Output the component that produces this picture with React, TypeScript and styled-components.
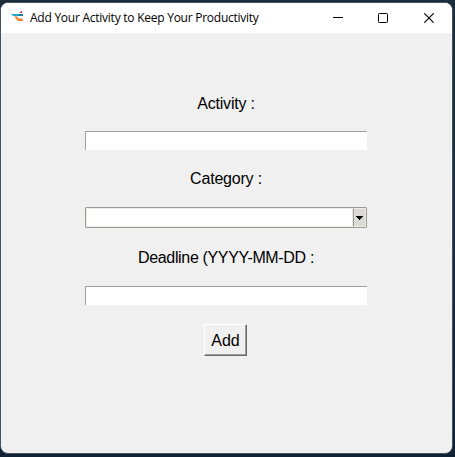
import React from "react";
import styled, { createGlobalStyle } from "styled-components";

const GlobalStyle = createGlobalStyle`
  * { box-sizing: border-box; }
  body { margin: 0; background: #1b2b3a; overflow: hidden; }
`;

const Desktop = styled.div`
  width: 455px;
  height: 457px;
  padding: 2px 2px 3px 0;
  background: linear-gradient(#1c2c3b, #1c2f40 50%, #0f2132);
`;

const Window = styled.main`
  display: flex;
  flex-direction: column;
  width: 453px;
  height: 452px;
  border: 1px solid #46535e;
  border-radius: 8px;
  overflow: hidden;
  background: #f0f0f0;
  color: #000;
`;

const TitleBar = styled.header`
  display: flex;
  align-items: center;
  flex: none;
  height: 30px;
  padding-left: 10px;
  background: #fff;
`;

const AppIcon = styled.svg`
  flex: none;
  width: 14px;
  height: 14px;
  margin-right: 5px;
`;

const Title = styled.h1`
  flex: 1;
  margin: 0;
  font: 400 12px/30px "Open Sans", "Noto Sans", sans-serif;
  letter-spacing: -0.25px;
  white-space: nowrap;
`;

const Controls = styled.div`
  display: flex;
  height: 100%;
`;

const ControlButton = styled.button<{ $width: number }>`
  display: flex;
  align-items: center;
  justify-content: center;
  width: ${(p) => p.$width}px;
  height: 29px;
  padding: 0;
  border: 0;
  background: transparent;
`;

const Form = styled.form`
  display: flex;
  flex-direction: column;
  align-items: center;
  width: 282px;
  margin: 59px 0 0 84px;
  font: 16px/24px "Liberation Sans", Arial, sans-serif;
`;

const Label = styled.label<{ $tracking: number }>`
  height: 24px;
  letter-spacing: ${(p) => p.$tracking}px;
  white-space: nowrap;
`;

const Entry = styled.input`
  width: 282px;
  height: 19px;
  margin: 15px 0 17px;
  padding: 0 3px;
  border: 0 solid #a0a0a0;
  border-width: 1px 0 0 1px;
  border-radius: 0;
  outline: none;
  background: #fff;
  font: inherit;
`;

const DeadlineEntry = styled(Entry)`
  margin: 16px 0 19px;
`;

const Combo = styled.div`
  display: flex;
  width: 282px;
  height: 21px;
  margin: 16px 0 18px;
  border: 1px solid #9e9a91;
  border-radius: 1px;
  background: #fff;
`;

const ComboInput = styled.input`
  flex: 1;
  min-width: 0;
  padding: 0 3px;
  border: 1px solid #eeebe7;
  border-radius: 0;
  outline: none;
  font: inherit;
`;

const ComboArrow = styled.button`
  display: flex;
  align-items: center;
  justify-content: center;
  width: 13px;
  padding: 0;
  border: 1px solid #eeebe7;
  border-left: 1px solid #9e9a91;
  background: #dcdad5;
`;

const AddButton = styled.button`
  width: 43px;
  height: 32px;
  margin-right: 1px;
  padding: 2px 0 0;
  border: 1px solid;
  border-color: #fff #696969 #696969 #fff;
  border-radius: 0;
  box-shadow: inset -1px -1px #a0a0a0;
  background: #f0f0f0;
  color: #000;
  font: inherit;
`;

export default function App() {
  return (
    <>
      <GlobalStyle />
      <Desktop>
        <Window>
          <TitleBar>
            <AppIcon viewBox="0 0 14 14" aria-hidden="true">
              <path d="M0 3H12V5H2Z" fill="#25a7cb" />
              <path d="M7 3h5v2H8Z" fill="#167da9" />
              <path d="M3 5.5H6.3L7.3 7.5H11.2L12.2 10H7.2L5.8 8.5Z" fill="#f47b28" />
              <path d="M9 1h1V0h1v2H9Z" fill="#d6202b" />
            </AppIcon>
            <Title>Add Your Activity to Keep Your Productivity</Title>
            <Controls>
              <ControlButton $width={45} type="button" aria-label="Minimize">
                <svg width="10" height="11"><path d="M0 5.5H10" stroke="#000" /></svg>
              </ControlButton>
              <ControlButton $width={46} type="button" aria-label="Maximize">
                <svg width="10" height="10"><rect x=".5" y=".5" width="9" height="9" rx=".8" fill="none" stroke="#000" /></svg>
              </ControlButton>
              <ControlButton $width={46} type="button" aria-label="Close">
                <svg width="10" height="10"><path d="M.3.3 9.7 9.7M9.7.3.3 9.7" stroke="#000" strokeWidth="1.1" /></svg>
              </ControlButton>
            </Controls>
          </TitleBar>
          <Form>
            <Label $tracking={-0.2} htmlFor="activity">Activity :</Label>
            <Entry id="activity" />
            <Label $tracking={-0.2} htmlFor="category">Category :</Label>
            <Combo>
              <ComboInput id="category" />
              <ComboArrow type="button" aria-label="Show categories">
                <svg width="7" height="4" shapeRendering="crispEdges">
                  <path d="M0 0h7v1H6v1H5v1H4v1H3V3H2V2H1V1H0Z" />
                </svg>
              </ComboArrow>
            </Combo>
            <Label $tracking={-0.34} htmlFor="deadline">Deadline (YYYY-MM-DD :</Label>
            <DeadlineEntry id="deadline" />
            <AddButton type="button">Add</AddButton>
          </Form>
        </Window>
      </Desktop>
    </>
  );
}
